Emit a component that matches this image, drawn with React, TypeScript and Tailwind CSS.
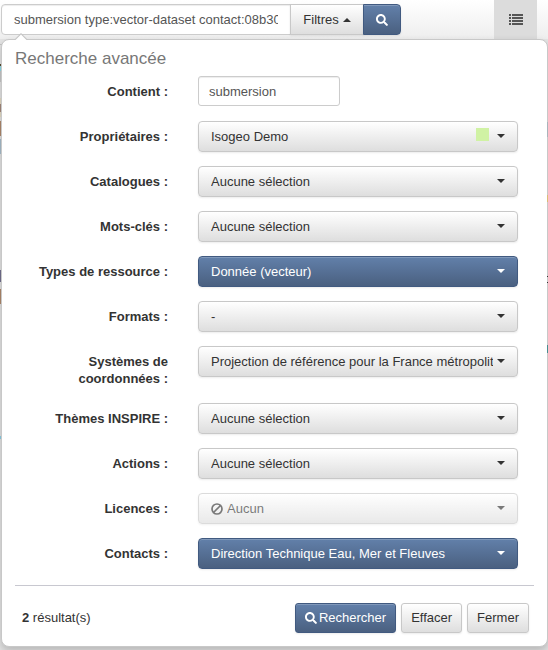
import { useId, type ReactNode } from "react";
import { FaSearch } from "react-icons/fa";

const LIGHT =
  "border-[#c8c8c8] bg-linear-to-b from-white to-[#dedede] text-[#333333] shadow-[inset_0_1px_0_rgba(255,255,255,0.2),0_1px_2px_rgba(0,0,0,0.08)]";
const BLUE =
  "border-[#415a80] bg-linear-to-b from-[#6280aa] to-[#4a6080] text-white shadow-[inset_0_1px_0_rgba(255,255,255,0.2),0_1px_2px_rgba(0,0,0,0.08)]";
const FIELD =
  "border border-[#cccccc] bg-white text-[#555555] shadow-[inset_0_1px_1px_rgba(0,0,0,0.075)] outline-none";

function Caret({ up = false }: { up?: boolean }) {
  return (
    <svg width="8" height="4" viewBox="0 0 8 4" fill="currentColor" aria-hidden="true">
      <path d={up ? "M0 4 4 0l4 4z" : "M0 0h8L4 4z"} />
    </svg>
  );
}

function BanIcon() {
  return (
    <svg width="12" height="12" viewBox="0 0 12 12" fill="none" stroke="currentColor" strokeWidth="1.700" aria-hidden="true">
      <circle cx="6" cy="6" r="5" />
      <path d="M2.500 9.500l7-7" />
    </svg>
  );
}

function ListIcon() {
  return (
    <svg width="14" height="11" viewBox="0 0 14 11" fill="currentColor" shapeRendering="crispEdges" aria-hidden="true">
      <path d="M0 0h2v2H0zM0 3h2v2H0zM0 6h2v2H0zM0 9h2v2H0zM3 0h11v2H3zM3 3h11v2H3zM3 6h11v2H3zM3 9h11v2H3z" />
    </svg>
  );
}

function Row({ id, label, children }: { id: string; label: string; children: ReactNode }) {
  return (
    <div className="flex items-start gap-[30px]">
      <label htmlFor={id} className="w-[153px] shrink-0 pt-[7px] pb-0.5 text-right leading-[17px] font-bold">
        {label}
      </label>
      <div className="relative mr-4 min-w-0 flex-1">{children}</div>
    </div>
  );
}

type FilterProps = {
  label: string;
  value: string;
  active?: boolean;
  disabled?: boolean;
  swatch?: boolean;
};

function Filter({ label, value, active, disabled, swatch }: FilterProps) {
  const id = useId();
  return (
    <Row id={id} label={label}>
      <div className={disabled ? "opacity-65" : ""}>
        <select
          id={id}
          disabled={disabled}
          className={`block h-[31px] w-full appearance-none overflow-hidden rounded-[4px] border pr-[24px] opacity-100 ${
            disabled ? "pl-7" : "pl-3"
          } ${active ? BLUE : LIGHT}`}
        >
          <option>{value}</option>
        </select>
        {disabled && (
          <span className="pointer-events-none absolute top-[10px] left-[13px] flex">
            <BanIcon />
          </span>
        )}
        {swatch && <span className="pointer-events-none absolute top-[7px] right-[29px] size-[13px] bg-[#d0f2a4]" />}
        <span
          className={`pointer-events-none absolute top-[13px] right-[13px] flex ${active ? "text-white" : "text-[#333333]"}`}
        >
          <Caret />
        </span>
      </div>
    </Row>
  );
}

const FILTERS: FilterProps[] = [
  { label: "Propriétaires :", value: "Isogeo Demo", swatch: true },
  { label: "Catalogues :", value: "Aucune sélection" },
  { label: "Mots-clés :", value: "Aucune sélection" },
  { label: "Types de ressource :", value: "Donnée (vecteur)", active: true },
  { label: "Formats :", value: "-" },
  { label: "Systèmes de coordonnées :", value: "Projection de référence pour la France métropolitaine" },
  { label: "Thèmes INSPIRE :", value: "Aucune sélection" },
  { label: "Actions :", value: "Aucune sélection" },
  { label: "Licences :", value: "Aucun", disabled: true },
  { label: "Contacts :", value: "Direction Technique Eau, Mer et Fleuves", active: true },
];

/* Slivers of the result list that stay visible on both sides of the panel. */
function ResultsBehind() {
  return (
    <div className="absolute inset-x-0 top-[39px] bottom-0 bg-[#e4e4e4]" aria-hidden="true">
      <span className="absolute top-[5px] left-0 h-px w-0.5 bg-[#c4c4c4]" />
      <span className="absolute top-[25px] left-0 h-0.5 w-0.5 bg-[#5b4a2c]" />
      <span className="absolute top-[27px] left-0 h-[5px] w-0.5 bg-[#8fdcea]" />
      <span className="absolute top-[32px] left-0 h-[11px] w-0.5 bg-[#c8c8c8]" />
      <span className="absolute top-[59px] left-0 h-[19px] w-0.5 bg-[#e5dcc5]" />
      <span className="absolute top-[65px] left-0 h-2 w-0.5 bg-[#a58a7d]" />
      <span className="absolute top-[82px] left-0 h-[15px] w-0.5 bg-[#b08a6d]" />
      <span className="absolute top-[100px] left-0 h-[15px] w-0.5 bg-[#a9bfcd]" />
      <span className="absolute top-[231px] left-0 h-3 w-0.5 bg-[#74718f]" />
      <span className="absolute top-[250px] left-0 h-[15px] w-0.5 bg-[#b08a6d]" />
      <span className="absolute top-[397px] left-0 h-[3px] w-0.5 bg-[#8ccfe6]" />
    </div>
  );
}

function RightEdge() {
  return (
    <div className="pointer-events-none absolute inset-y-0 -right-px w-px" aria-hidden="true">
      <span className="absolute top-[82px] right-0 h-[15px] w-px bg-[#a9b4bb]" />
      <span className="absolute top-[155px] right-0 h-[7px] w-px bg-[#d9bd75]" />
      <span className="absolute top-[236px] right-0 h-px w-px bg-[#333333]" />
      <span className="absolute top-[242px] right-0 h-px w-px bg-[#333333]" />
      <span className="absolute top-[305px] right-0 h-2 w-px bg-[#468e91]" />
    </div>
  );
}

export default function App() {
  return (
    <div className="relative flex min-h-screen flex-col bg-[#e4e4e4] font-['Liberation_Sans',Arial,sans-serif] text-[13px] leading-[18px] text-[#333333]">
      <ResultsBehind />

      <header className="flex h-[39px] justify-between bg-linear-to-b from-white to-[#eeeeee] pr-[11px] pl-px">
        <form className="flex h-[35px] pt-1" onSubmit={(e) => e.preventDefault()}>
          <input
            type="text"
            aria-label="Recherche"
            defaultValue="submersion type:vector-dataset contact:08b3025f"
            className={`h-[31px] w-[290px] rounded-l-[4px] px-3 ${FIELD}`}
          />
          <button
            type="button"
            className={`-ml-px flex h-[31px] w-[74px] items-center justify-center gap-1 border ${LIGHT}`}
          >
            Filtres <Caret up />
          </button>
          <button
            type="submit"
            aria-label="Rechercher"
            className={`-ml-px flex h-[31px] w-[38px] items-center justify-center rounded-r-[4px] border ${BLUE}`}
          >
            <FaSearch className="size-3" />
          </button>
        </form>
        <button
          type="button"
          aria-label="Liste"
          className="flex w-[43px] items-center justify-center bg-[#dcdcdc] text-[#555555]"
        >
          <ListIcon />
        </button>
      </header>

      <section
        aria-labelledby="advanced-title"
        className="relative ml-px rounded-lg border border-[#c8c8c8] bg-white px-[13px] pb-[13px] shadow-[0_4px_8px_rgba(0,0,0,0.2)]"
      >
        <svg className="absolute -top-[7px] left-[12px]" width="14" height="7" viewBox="0 0 14 7" aria-hidden="true">
          <path d="M0 7 7 0l7 7z" fill="#c4c4c4" />
          <path d="M1.500 7 7 1.500 12.500 7z" fill="#ffffff" />
        </svg>
        <RightEdge />

        <h2 id="advanced-title" className="pt-[9px] text-[17px] leading-5 text-[#777777]">
          Recherche avancée
        </h2>

        <div className="flex flex-col gap-[14px] pt-[7px]">
          <Row id="contains" label="Contient :">
            <input
              id="contains"
              type="text"
              defaultValue="submersion"
              className={`block h-[30px] w-[142px] rounded-[3px] px-[10px] ${FIELD}`}
            />
          </Row>
          {FILTERS.map((filter, i) => (
            <div key={filter.label} className={i === 0 ? "pt-px" : ""}>
              <Filter {...filter} />
            </div>
          ))}
        </div>

        <hr className="mt-4 border-[#c8c8d0]" />

        <footer className="mt-[17px] flex items-center gap-[5px] pr-[5px] pl-[7px]">
          <p className="mr-auto">
            <strong>2</strong> résultat(s)
          </p>
          <button type="button" className={`flex h-[30px] items-center gap-0.5 rounded-[3px] border px-[9px] ${BLUE}`}>
            <FaSearch className="size-3" />
            Rechercher
          </button>
          <button type="button" className={`h-[30px] rounded-[3px] border px-[9px] ${LIGHT}`}>
            Effacer
          </button>
          <button type="button" className={`h-[30px] rounded-[3px] border px-[9px] ${LIGHT}`}>
            Fermer
          </button>
        </footer>
      </section>
    </div>
  );
}
